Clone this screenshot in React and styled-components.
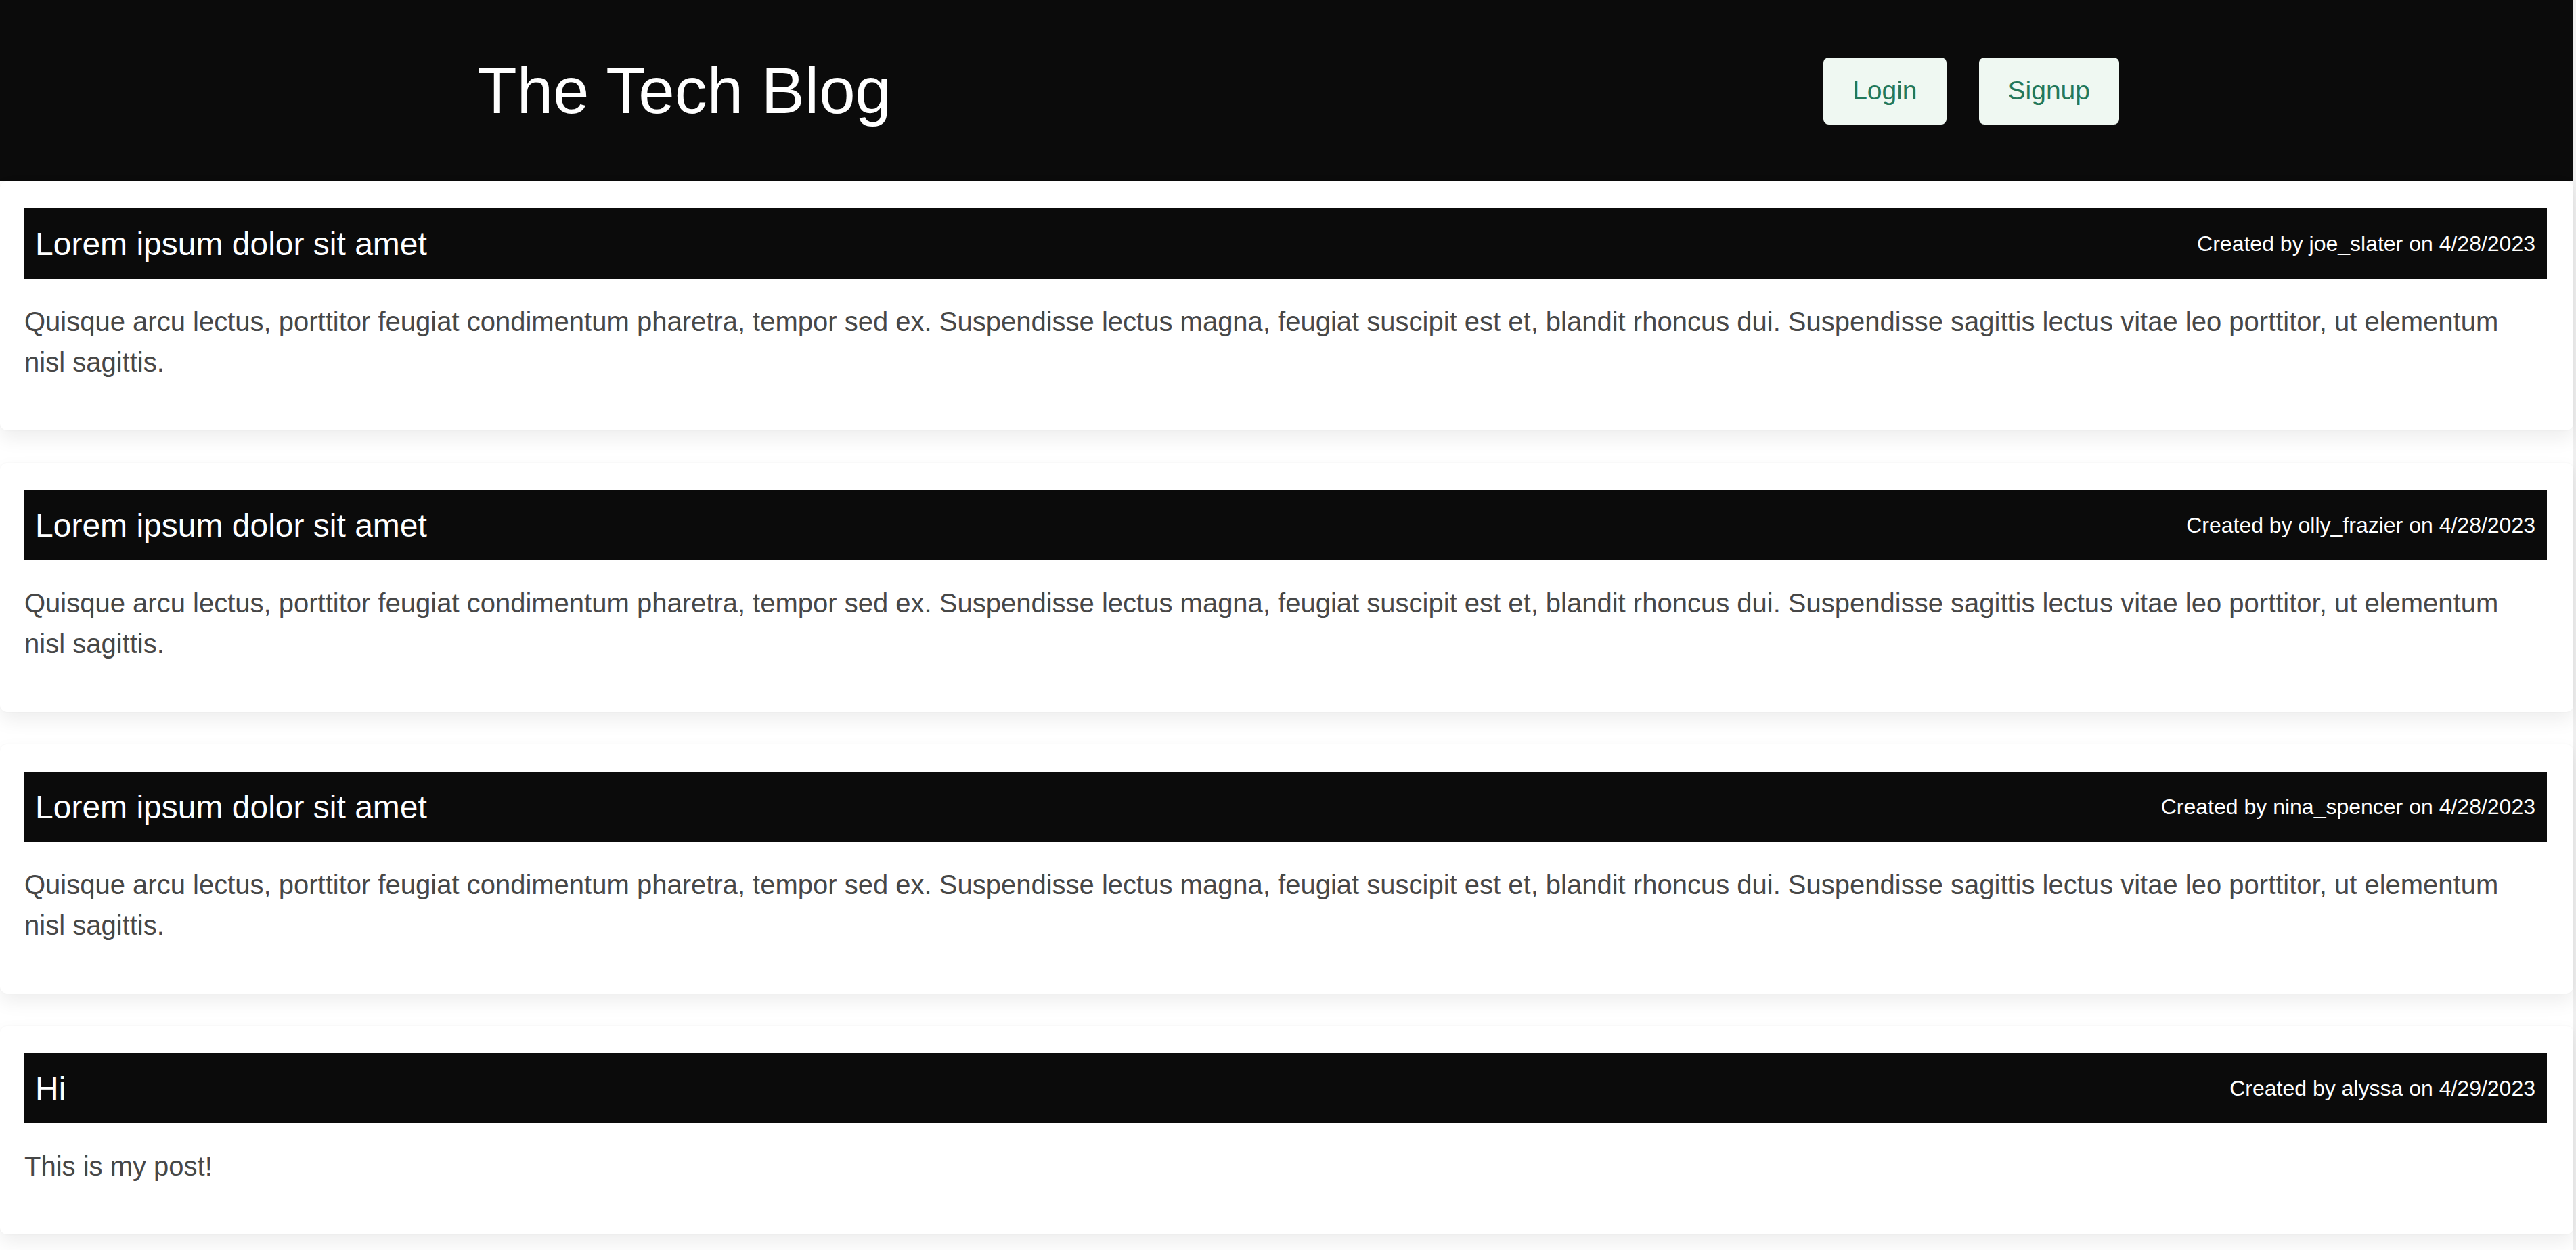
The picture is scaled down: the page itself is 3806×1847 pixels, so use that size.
import React from "react";
import styled, { createGlobalStyle } from "styled-components";

const GlobalStyle = createGlobalStyle`
  html, body {
    margin: 0;
    padding: 0;
    background: #efefef;
  }
  body {
    font-family: "Liberation Sans", Arial, sans-serif;
  }
`;

const Page = styled.div`
  width: 3802px;
  min-height: 1847px;
  background: #ffffff;
`;

const Header = styled.header`
  height: 268px;
  background: #0b0b0b;
  display: flex;
  align-items: center;
  justify-content: space-between;
  padding: 0 671px 0 705px;
  box-sizing: border-box;
`;

const Title = styled.h1`
  margin: 0;
  font-size: 96px;
  font-weight: 400;
  color: #ffffff;
  line-height: 1.15;
`;

const Nav = styled.nav`
  display: flex;
  gap: 48px;
  align-items: center;
`;

const NavButton = styled.button`
  height: 99px;
  padding: 0 ${(p) => p.$pad}px;
  background: #eff8f2;
  color: #23785a;
  border: none;
  border-radius: 8px;
  font-family: "Liberation Sans", Arial, sans-serif;
  font-size: 39px;
  cursor: pointer;
`;

const Feed = styled.main`
  display: flex;
  flex-direction: column;
  gap: 48px;
`;

const Card = styled.article`
  background: #ffffff;
  border-radius: 10px;
  padding: 40px 39px 40px 36px;
  box-shadow: 0 12px 28px rgba(0, 0, 0, 0.07), 0 0 3px rgba(0, 0, 0, 0.04);
`;

const Bar = styled.div`
  height: 104px;
  background: #0b0b0b;
  display: flex;
  align-items: center;
  justify-content: space-between;
  padding: 0 17px 0 16px;
  box-sizing: border-box;
`;

const PostTitle = styled.h2`
  margin: 0;
  font-size: 48px;
  font-weight: 400;
  color: #ffffff;
`;

const Meta = styled.span`
  font-size: 32px;
  color: #ffffff;
`;

const Body = styled.p`
  margin: 33px 40px 31px 0;
  font-size: 40px;
  line-height: 60px;
  color: #474747;
`;

const lorem =
  "Quisque arcu lectus, porttitor feugiat condimentum pharetra, tempor sed ex. Suspendisse lectus magna, feugiat suscipit est et, blandit rhoncus dui. Suspendisse sagittis lectus vitae leo porttitor, ut elementum nisl sagittis.";

const posts = [
  { title: "Lorem ipsum dolor sit amet", user: "joe_slater", date: "4/28/2023", body: lorem },
  { title: "Lorem ipsum dolor sit amet", user: "olly_frazier", date: "4/28/2023", body: lorem },
  { title: "Lorem ipsum dolor sit amet", user: "nina_spencer", date: "4/28/2023", body: lorem },
  { title: "Hi", user: "alyssa", date: "4/29/2023", body: "This is my post!" },
];

export default function App() {
  return (
    <>
      <GlobalStyle />
      <Page>
        <Header>
          <Title>The Tech Blog</Title>
          <Nav>
            <NavButton $pad={43}>Login</NavButton>
            <NavButton $pad={43}>Signup</NavButton>
          </Nav>
        </Header>
        <Feed>
          {posts.map((p, i) => (
            <Card key={i}>
              <Bar>
                <PostTitle>{p.title}</PostTitle>
                <Meta>
                  Created by {p.user} on {p.date}
                </Meta>
              </Bar>
              <Body>{p.body}</Body>
            </Card>
          ))}
        </Feed>
      </Page>
    </>
  );
}
